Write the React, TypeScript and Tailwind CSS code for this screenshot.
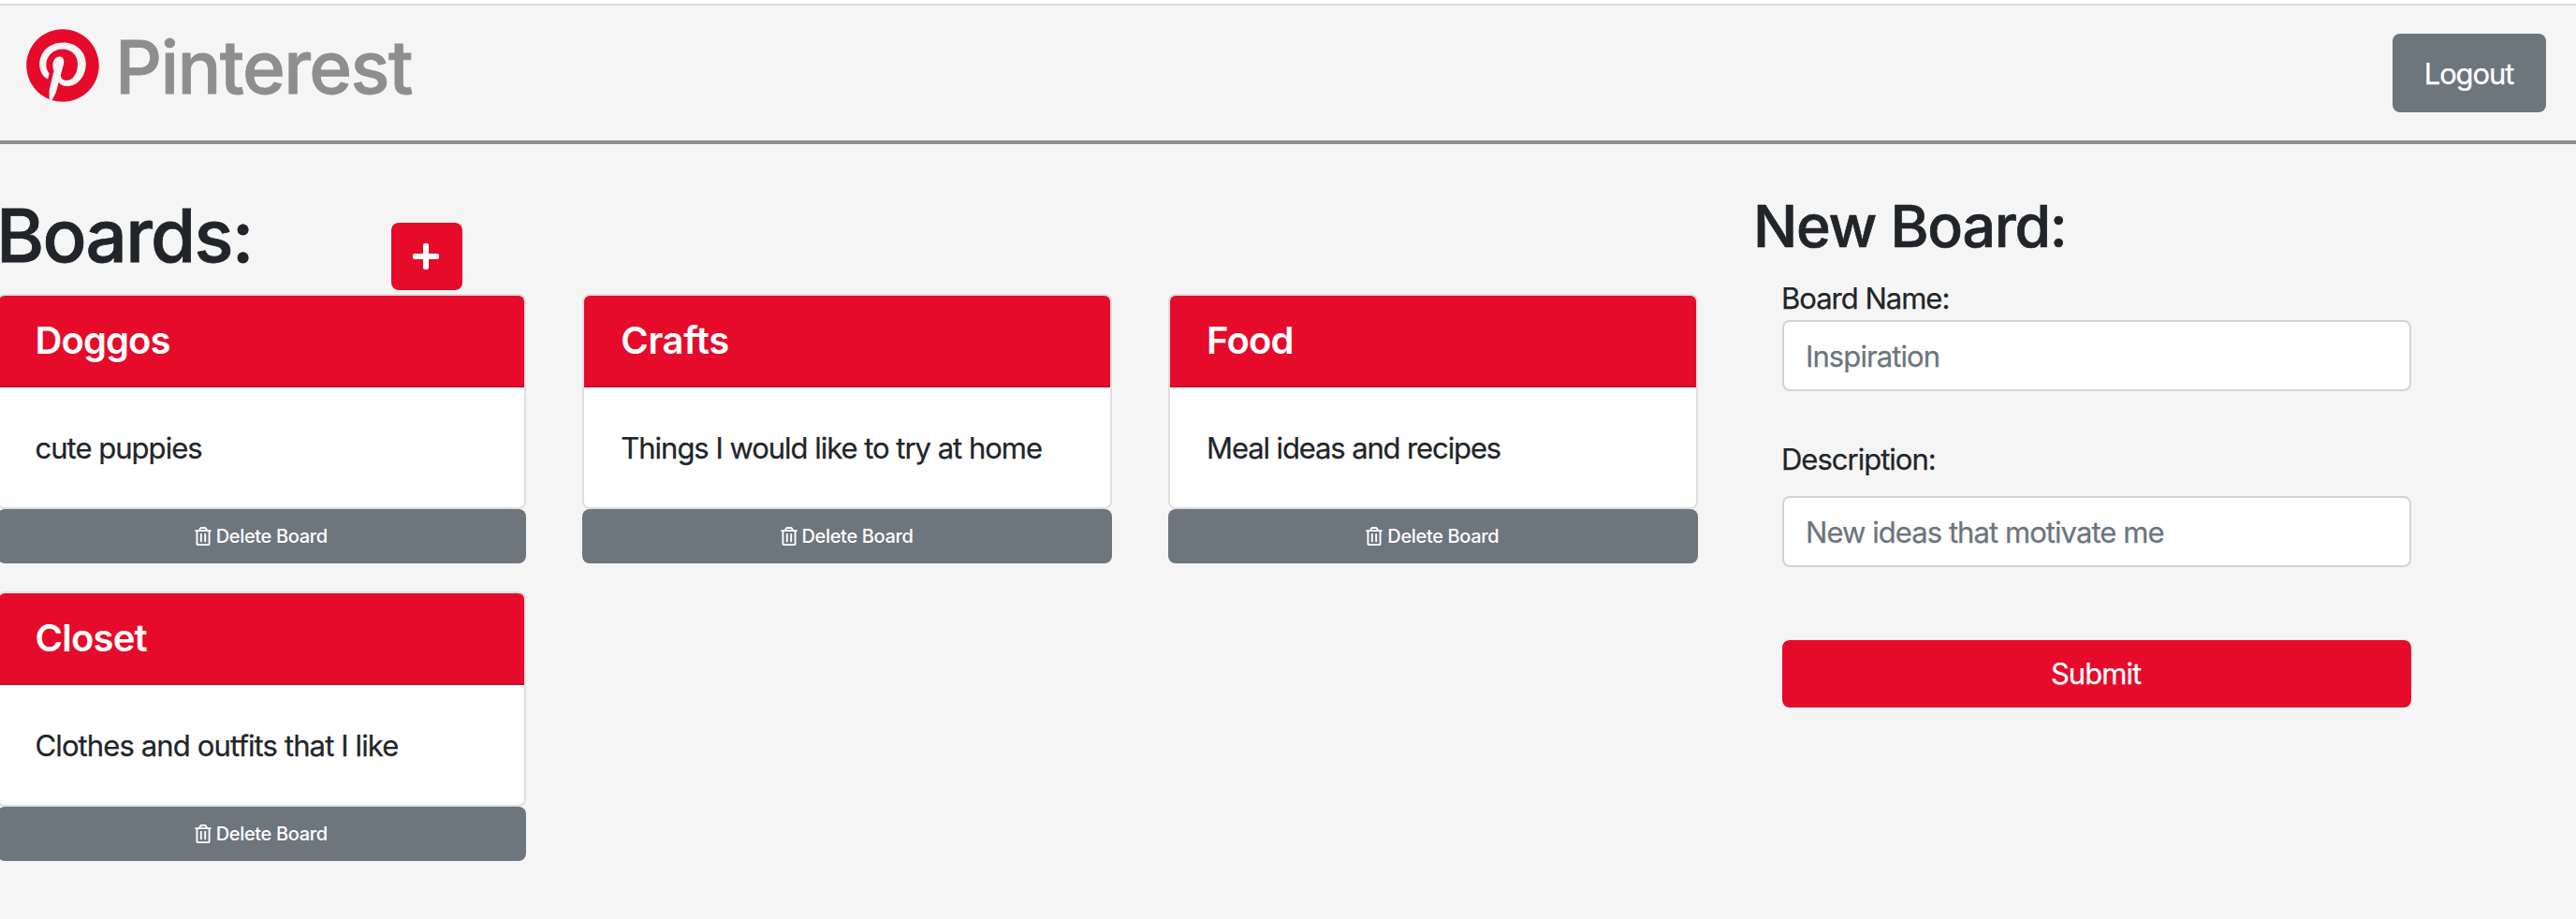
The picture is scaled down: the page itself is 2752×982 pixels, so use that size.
import { FaPinterest, FaPlus, FaRegTrashAlt } from 'react-icons/fa';

type Board = { title: string; titleClass: string; description: string; descriptionClass: string };

const boards: Board[] = [
  { title: 'Doggos', titleClass: 'tracking-[-0.93px]', description: 'cute puppies', descriptionClass: 'tracking-[-0.98px]' },
  { title: 'Crafts', titleClass: 'tracking-[-0.36px]', description: 'Things I would like to try at home', descriptionClass: 'tracking-[-1.02px]' },
  { title: 'Food', titleClass: 'tracking-[-0.81px]', description: 'Meal ideas and recipes', descriptionClass: 'tracking-[-1.12px]' },
  { title: 'Closet', titleClass: 'tracking-[-0.78px]', description: 'Clothes and outfits that I like', descriptionClass: 'tracking-[-0.88px]' },
];

function BoardCard({ board }: { board: Board }) {
  return (
    <article className="flex flex-col">
      <div className="flex h-[230px] flex-col overflow-hidden rounded-[8px] border-2 border-[#dfdfdf] bg-white">
        <div className="flex h-[98px] items-center border-b-2 border-[#c90a26] bg-[#e60b2b] pl-[39px]">
          <h3 className={`text-[40px] leading-[48px] font-semibold text-white ${board.titleClass}`}>{board.title}</h3>
        </div>
        <div className="flex flex-1 items-center pt-[1px] pl-[39px]">
          <p className={`text-[31px] leading-[48px] whitespace-nowrap [-webkit-text-stroke:0.25px_currentColor] ${board.descriptionClass}`}>{board.description}</p>
        </div>
      </div>
      <button className="flex h-[58px] items-center justify-center rounded-[8px] bg-[#6d757d] pr-[1px] text-white">
        <FaRegTrashAlt className="mr-[5px] h-[20px] w-[18px]" />
        <span className="text-[20px] leading-[30px] font-medium tracking-[-0.34px]">Delete Board</span>
      </button>
    </article>
  );
}

export default function App() {
  return (
    <div className="h-[982px] w-[2752px] overflow-hidden bg-[#f5f5f5] font-['Inter',sans-serif] text-[#212529]">
      <div className="h-[6px] border-b-2 border-[#dadadf] bg-white" />
      <header className="flex h-[148px] items-start justify-between border-b-4 border-[#8e8e8e] pr-8 pl-7">
        <div className="flex items-start pt-6">
          <FaPinterest className="h-[80px] w-[78px] text-[#e60b2b]" />
          <span className="mt-[2px] ml-[17px] text-[78px] leading-[80px] font-medium tracking-[-1.6px] text-[#8e8e8e] [-webkit-text-stroke:0.8px_#8e8e8e]">Pinterest</span>
        </div>
        <button className="mt-[30px] h-[84px] w-[164px] rounded-[8px] bg-[#6d757d] pt-[2px] pr-[1px] text-[31px] tracking-[-1.1px] text-white [-webkit-text-stroke:0.25px_currentColor]">Logout</button>
      </header>

      <main className="flex">
        <section className="w-[1872px] shrink-0">
          <div className="flex h-[160px] items-start">
            <h1 className="mt-[58px] -ml-[4px] w-[422px] text-[78px] leading-[80px] font-medium tracking-[-1.74px] [-webkit-text-stroke:0.8px_currentColor]">Boards:</h1>
            <button className="mt-[84px] flex h-[72px] w-[76px] items-center justify-center rounded-[8px] bg-[#e60b2b] pr-[2px] text-white">
              <FaPlus className="h-[32px] w-[28px]" />
            </button>
          </div>
          <div className="-ml-[3.5px] grid grid-cols-[565.5px_565.5px_565.5px] gap-x-[60.3px] gap-y-[30px]">
            {boards.map((board) => (
              <BoardCard key={board.title} board={board} />
            ))}
          </div>
        </section>

        <aside className="pt-[49px]">
          <h2 className="ml-px text-[62.5px] leading-[76px] font-medium tracking-[-1.24px] [-webkit-text-stroke:0.7px_currentColor]">New Board:</h2>
          <form className="mt-4 ml-8 flex w-[672px] flex-col">
            <label className="-ml-px text-[31px] leading-[47px] tracking-[-1px] [-webkit-text-stroke:0.25px_currentColor]">Board Name:</label>
            <input
              className="h-[76px] rounded-[8px] border-2 border-[#ced4da] bg-white px-[23px] pt-[1px] text-[31px] tracking-[-0.9px] [-webkit-text-stroke:0.25px_#6c757d] placeholder:text-[#6c757d]"
              placeholder="Inspiration"
            />
            <label className="mt-[49px] -ml-px text-[31px] leading-[47px] tracking-[-1px] [-webkit-text-stroke:0.25px_currentColor]">Description:</label>
            <input
              className="mt-4 h-[76px] rounded-[8px] border-2 border-[#ced4da] bg-white px-[23px] pt-[1px] text-[31px] tracking-[-0.94px] [-webkit-text-stroke:0.25px_#6c757d] placeholder:text-[#6c757d]"
              placeholder="New ideas that motivate me"
            />
            <button type="button" className="mt-[78px] h-[72px] rounded-[8px] bg-[#e60b2b] pt-[1px] pr-[2px] text-[31px] tracking-[-0.97px] text-white [-webkit-text-stroke:0.25px_currentColor]">
              Submit
            </button>
          </form>
        </aside>
      </main>
    </div>
  );
}
